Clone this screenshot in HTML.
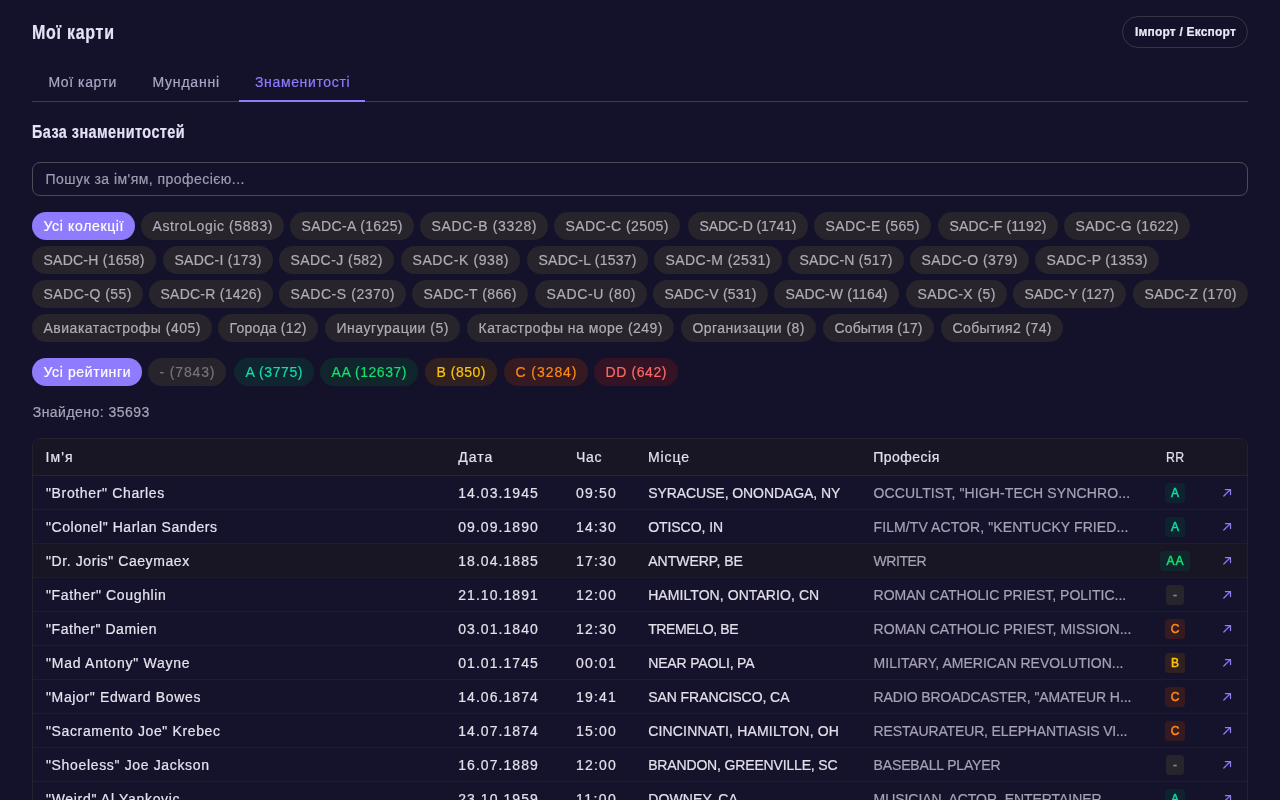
<!DOCTYPE html><html><head><meta charset="utf-8"><style>
html,body{margin:0;padding:0;width:1280px;height:800px;overflow:hidden;background:#14122b;}
body{position:relative;font-family:"Liberation Sans",sans-serif;}
.root{position:absolute;left:0;top:0;width:1280px;height:800px;will-change:transform;}
.b{position:absolute;box-sizing:border-box;}
.t{position:absolute;white-space:nowrap;-webkit-text-stroke:0.2px currentColor;}
</style></head><body><div class="root">
<div class="b" style="left:1122px;top:16px;width:126px;height:32px;border:1px solid #37344a;border-radius:16px;"></div>
<div class="b" style="left:32px;top:101px;width:1216px;height:1px;background:#3f3d4b;"></div>
<div class="b" style="left:239px;top:100px;width:126px;height:2px;background:#8e7bfd;"></div>
<div class="b" style="left:32px;top:162px;width:1216px;height:34px;border:1px solid #4d4c56;border-radius:8px;"></div>
<div class="b" style="left:32px;top:212px;width:103px;height:28px;background:#8e7bfd;border-radius:14px;"></div>
<div class="b" style="left:141px;top:212px;width:143px;height:28px;background:#27242b;border-radius:14px;"></div>
<div class="b" style="left:290px;top:212px;width:124px;height:28px;background:#27242b;border-radius:14px;"></div>
<div class="b" style="left:420px;top:212px;width:128px;height:28px;background:#27242b;border-radius:14px;"></div>
<div class="b" style="left:554px;top:212px;width:126px;height:28px;background:#27242b;border-radius:14px;"></div>
<div class="b" style="left:688px;top:212px;width:120px;height:28px;background:#27242b;border-radius:14px;"></div>
<div class="b" style="left:814px;top:212px;width:117px;height:28px;background:#27242b;border-radius:14px;"></div>
<div class="b" style="left:938px;top:212px;width:120px;height:28px;background:#27242b;border-radius:14px;"></div>
<div class="b" style="left:1064px;top:212px;width:126px;height:28px;background:#27242b;border-radius:14px;"></div>
<div class="b" style="left:32px;top:246px;width:124px;height:28px;background:#27242b;border-radius:14px;"></div>
<div class="b" style="left:163px;top:246px;width:110px;height:28px;background:#27242b;border-radius:14px;"></div>
<div class="b" style="left:279px;top:246px;width:115px;height:28px;background:#27242b;border-radius:14px;"></div>
<div class="b" style="left:401px;top:246px;width:119px;height:28px;background:#27242b;border-radius:14px;"></div>
<div class="b" style="left:527px;top:246px;width:121px;height:28px;background:#27242b;border-radius:14px;"></div>
<div class="b" style="left:654px;top:246px;width:128px;height:28px;background:#27242b;border-radius:14px;"></div>
<div class="b" style="left:788px;top:246px;width:116px;height:28px;background:#27242b;border-radius:14px;"></div>
<div class="b" style="left:910px;top:246px;width:119px;height:28px;background:#27242b;border-radius:14px;"></div>
<div class="b" style="left:1035px;top:246px;width:124px;height:28px;background:#27242b;border-radius:14px;"></div>
<div class="b" style="left:32px;top:280px;width:111px;height:28px;background:#27242b;border-radius:14px;"></div>
<div class="b" style="left:149px;top:280px;width:124px;height:28px;background:#27242b;border-radius:14px;"></div>
<div class="b" style="left:279px;top:280px;width:127px;height:28px;background:#27242b;border-radius:14px;"></div>
<div class="b" style="left:412px;top:280px;width:116px;height:28px;background:#27242b;border-radius:14px;"></div>
<div class="b" style="left:535px;top:280px;width:112px;height:28px;background:#27242b;border-radius:14px;"></div>
<div class="b" style="left:653px;top:280px;width:115px;height:28px;background:#27242b;border-radius:14px;"></div>
<div class="b" style="left:774px;top:280px;width:125px;height:28px;background:#27242b;border-radius:14px;"></div>
<div class="b" style="left:906px;top:280px;width:101px;height:28px;background:#27242b;border-radius:14px;"></div>
<div class="b" style="left:1013px;top:280px;width:113px;height:28px;background:#27242b;border-radius:14px;"></div>
<div class="b" style="left:1133px;top:280px;width:115px;height:28px;background:#27242b;border-radius:14px;"></div>
<div class="b" style="left:32px;top:314px;width:180px;height:28px;background:#27242b;border-radius:14px;"></div>
<div class="b" style="left:218px;top:314px;width:100px;height:28px;background:#27242b;border-radius:14px;"></div>
<div class="b" style="left:325px;top:314px;width:135px;height:28px;background:#27242b;border-radius:14px;"></div>
<div class="b" style="left:467px;top:314px;width:207px;height:28px;background:#27242b;border-radius:14px;"></div>
<div class="b" style="left:681px;top:314px;width:135px;height:28px;background:#27242b;border-radius:14px;"></div>
<div class="b" style="left:823px;top:314px;width:111px;height:28px;background:#27242b;border-radius:14px;"></div>
<div class="b" style="left:941px;top:314px;width:122px;height:28px;background:#27242b;border-radius:14px;"></div>
<div class="b" style="left:32px;top:358px;width:110px;height:28px;background:#8e7bfd;border-radius:14px;"></div>
<div class="b" style="left:148px;top:358px;width:78px;height:28px;background:#27242b;border-radius:14px;"></div>
<div class="b" style="left:234px;top:358px;width:80px;height:28px;background:#0f2530;border-radius:14px;"></div>
<div class="b" style="left:320px;top:358px;width:98px;height:28px;background:#11252c;border-radius:14px;"></div>
<div class="b" style="left:425px;top:358px;width:72px;height:28px;background:#302020;border-radius:14px;"></div>
<div class="b" style="left:504px;top:358px;width:84px;height:28px;background:#351a21;border-radius:14px;"></div>
<div class="b" style="left:594px;top:358px;width:84px;height:28px;background:#341424;border-radius:14px;"></div>
<div class="b" style="left:32px;top:438px;width:1216px;height:400px;border:1px solid #25212d;border-radius:8px;background:#15122c;"></div>
<div class="b" style="left:33px;top:439px;width:1214px;height:36px;background:#181524;border-radius:7px 7px 0 0;"></div>
<div class="b" style="left:33px;top:475px;width:1214px;height:1px;background:#27262a;"></div>
<div class="b" style="left:33px;top:509px;width:1214px;height:1px;background:#201d29;"></div>
<div class="b" style="left:1165.0px;top:483px;width:20px;height:20px;background:#0f2230;border-radius:3.5px;"></div>
<svg class="b" style="left:1216px;top:482px" width="22" height="22" viewBox="0 0 22 22"><path d="M9.4 7.5H14.5V12.6M7.8 14L14.3 7.6" fill="none" stroke="#8e7dfb" stroke-width="1.25" stroke-linecap="round" stroke-linejoin="round"/></svg>
<div class="b" style="left:33px;top:543px;width:1214px;height:1px;background:#201d29;"></div>
<div class="b" style="left:1165.0px;top:517px;width:20px;height:20px;background:#0f2230;border-radius:3.5px;"></div>
<svg class="b" style="left:1216px;top:516px" width="22" height="22" viewBox="0 0 22 22"><path d="M9.4 7.5H14.5V12.6M7.8 14L14.3 7.6" fill="none" stroke="#8e7dfb" stroke-width="1.25" stroke-linecap="round" stroke-linejoin="round"/></svg>
<div class="b" style="left:33px;top:544px;width:1214px;height:33px;background:#181524;"></div>
<div class="b" style="left:33px;top:577px;width:1214px;height:1px;background:#201d29;"></div>
<div class="b" style="left:1160.0px;top:551px;width:30px;height:20px;background:#11252c;border-radius:3.5px;"></div>
<svg class="b" style="left:1216px;top:550px" width="22" height="22" viewBox="0 0 22 22"><path d="M9.4 7.5H14.5V12.6M7.8 14L14.3 7.6" fill="none" stroke="#8e7dfb" stroke-width="1.25" stroke-linecap="round" stroke-linejoin="round"/></svg>
<div class="b" style="left:33px;top:611px;width:1214px;height:1px;background:#201d29;"></div>
<div class="b" style="left:1166.0px;top:585px;width:18px;height:20px;background:#27252c;border-radius:3.5px;"></div>
<svg class="b" style="left:1216px;top:584px" width="22" height="22" viewBox="0 0 22 22"><path d="M9.4 7.5H14.5V12.6M7.8 14L14.3 7.6" fill="none" stroke="#8e7dfb" stroke-width="1.25" stroke-linecap="round" stroke-linejoin="round"/></svg>
<div class="b" style="left:33px;top:645px;width:1214px;height:1px;background:#201d29;"></div>
<div class="b" style="left:1165.0px;top:619px;width:20px;height:20px;background:#351a21;border-radius:3.5px;"></div>
<svg class="b" style="left:1216px;top:618px" width="22" height="22" viewBox="0 0 22 22"><path d="M9.4 7.5H14.5V12.6M7.8 14L14.3 7.6" fill="none" stroke="#8e7dfb" stroke-width="1.25" stroke-linecap="round" stroke-linejoin="round"/></svg>
<div class="b" style="left:33px;top:679px;width:1214px;height:1px;background:#201d29;"></div>
<div class="b" style="left:1165.0px;top:653px;width:20px;height:20px;background:#302020;border-radius:3.5px;"></div>
<svg class="b" style="left:1216px;top:652px" width="22" height="22" viewBox="0 0 22 22"><path d="M9.4 7.5H14.5V12.6M7.8 14L14.3 7.6" fill="none" stroke="#8e7dfb" stroke-width="1.25" stroke-linecap="round" stroke-linejoin="round"/></svg>
<div class="b" style="left:33px;top:713px;width:1214px;height:1px;background:#201d29;"></div>
<div class="b" style="left:1165.0px;top:687px;width:20px;height:20px;background:#351a21;border-radius:3.5px;"></div>
<svg class="b" style="left:1216px;top:686px" width="22" height="22" viewBox="0 0 22 22"><path d="M9.4 7.5H14.5V12.6M7.8 14L14.3 7.6" fill="none" stroke="#8e7dfb" stroke-width="1.25" stroke-linecap="round" stroke-linejoin="round"/></svg>
<div class="b" style="left:33px;top:747px;width:1214px;height:1px;background:#201d29;"></div>
<div class="b" style="left:1165.0px;top:721px;width:20px;height:20px;background:#351a21;border-radius:3.5px;"></div>
<svg class="b" style="left:1216px;top:720px" width="22" height="22" viewBox="0 0 22 22"><path d="M9.4 7.5H14.5V12.6M7.8 14L14.3 7.6" fill="none" stroke="#8e7dfb" stroke-width="1.25" stroke-linecap="round" stroke-linejoin="round"/></svg>
<div class="b" style="left:33px;top:781px;width:1214px;height:1px;background:#201d29;"></div>
<div class="b" style="left:1166.0px;top:755px;width:18px;height:20px;background:#27252c;border-radius:3.5px;"></div>
<svg class="b" style="left:1216px;top:754px" width="22" height="22" viewBox="0 0 22 22"><path d="M9.4 7.5H14.5V12.6M7.8 14L14.3 7.6" fill="none" stroke="#8e7dfb" stroke-width="1.25" stroke-linecap="round" stroke-linejoin="round"/></svg>
<div class="b" style="left:33px;top:815px;width:1214px;height:1px;background:#201d29;"></div>
<div class="b" style="left:1165.0px;top:789px;width:20px;height:20px;background:#0f2230;border-radius:3.5px;"></div>
<svg class="b" style="left:1216px;top:788px" width="22" height="22" viewBox="0 0 22 22"><path d="M9.4 7.5H14.5V12.6M7.8 14L14.3 7.6" fill="none" stroke="#8e7dfb" stroke-width="1.25" stroke-linecap="round" stroke-linejoin="round"/></svg>
<div class="t" id="t0" style="left:31.80px;top:18.47px;font-size:20px;line-height:29px;color:#e6e2f5;font-weight:700;letter-spacing:0.908px;transform:scaleX(0.8);transform-origin:0 0;"><span>Мої карти</span></div>
<div class="t" id="t1" style="left:1134.90px;top:24.34px;font-size:12px;line-height:17px;color:#ece9f6;font-weight:700;letter-spacing:0.193px;"><span>Імпорт / Експорт</span></div>
<div class="t" id="t2" style="left:48.40px;top:72.45px;font-size:14px;line-height:20px;color:#aaa6c4;font-weight:400;letter-spacing:0.584px;"><span>Мої карти</span></div>
<div class="t" id="t3" style="left:152.40px;top:72.45px;font-size:14px;line-height:20px;color:#aaa6c4;font-weight:400;letter-spacing:0.815px;"><span>Мунданні</span></div>
<div class="t" id="t4" style="left:255.00px;top:72.45px;font-size:14px;line-height:20px;color:#8e7dfb;font-weight:400;letter-spacing:0.645px;"><span>Знаменитості</span></div>
<div class="t" id="t5" style="left:31.90px;top:118.56px;font-size:18px;line-height:26px;color:#e6e2f5;font-weight:700;letter-spacing:0.567px;transform:scaleX(0.8);transform-origin:0 0;"><span>База знаменитостей</span></div>
<div class="t" id="t6" style="left:45.60px;top:169.15px;font-size:14px;line-height:20px;color:#9f9bb2;font-weight:400;letter-spacing:0.457px;"><span>Пошук за ім'ям, професією...</span></div>
<div class="t" id="t7" style="left:32.00px;top:216.15px;font-size:14px;line-height:20px;color:#ffffff;font-weight:400;width:103px;text-align:center;letter-spacing:0.652px;text-indent:0.652px;"><span>Усі колекції</span></div>
<div class="t" id="t8" style="left:141.00px;top:216.15px;font-size:14px;line-height:20px;color:#b0acb6;font-weight:400;width:143px;text-align:center;letter-spacing:0.593px;text-indent:0.593px;"><span>AstroLogic (5883)</span></div>
<div class="t" id="t9" style="left:290.00px;top:216.15px;font-size:14px;line-height:20px;color:#b0acb6;font-weight:400;width:124px;text-align:center;letter-spacing:0.376px;text-indent:0.376px;"><span>SADC-A (1625)</span></div>
<div class="t" id="t10" style="left:420.00px;top:216.15px;font-size:14px;line-height:20px;color:#b0acb6;font-weight:400;width:128px;text-align:center;letter-spacing:0.645px;text-indent:0.645px;"><span>SADC-B (3328)</span></div>
<div class="t" id="t11" style="left:554.00px;top:216.15px;font-size:14px;line-height:20px;color:#b0acb6;font-weight:400;width:126px;text-align:center;letter-spacing:0.414px;text-indent:0.414px;"><span>SADC-C (2505)</span></div>
<div class="t" id="t12" style="left:688.00px;top:216.15px;font-size:14px;line-height:20px;color:#b0acb6;font-weight:400;width:120px;text-align:center;letter-spacing:-0.086px;text-indent:-0.086px;"><span>SADC-D (1741)</span></div>
<div class="t" id="t13" style="left:814.00px;top:216.15px;font-size:14px;line-height:20px;color:#b0acb6;font-weight:400;width:117px;text-align:center;letter-spacing:0.412px;text-indent:0.412px;"><span>SADC-E (565)</span></div>
<div class="t" id="t14" style="left:938.00px;top:216.15px;font-size:14px;line-height:20px;color:#b0acb6;font-weight:400;width:120px;text-align:center;letter-spacing:0.130px;text-indent:0.130px;"><span>SADC-F (1192)</span></div>
<div class="t" id="t15" style="left:1064.00px;top:216.15px;font-size:14px;line-height:20px;color:#b0acb6;font-weight:400;width:126px;text-align:center;letter-spacing:0.349px;text-indent:0.349px;"><span>SADC-G (1622)</span></div>
<div class="t" id="t16" style="left:32.00px;top:250.15px;font-size:14px;line-height:20px;color:#b0acb6;font-weight:400;width:124px;text-align:center;letter-spacing:0.247px;text-indent:0.247px;"><span>SADC-H (1658)</span></div>
<div class="t" id="t17" style="left:163.00px;top:250.15px;font-size:14px;line-height:20px;color:#b0acb6;font-weight:400;width:110px;text-align:center;letter-spacing:0.270px;text-indent:0.270px;"><span>SADC-I (173)</span></div>
<div class="t" id="t18" style="left:279.00px;top:250.15px;font-size:14px;line-height:20px;color:#b0acb6;font-weight:400;width:115px;text-align:center;letter-spacing:0.442px;text-indent:0.442px;"><span>SADC-J (582)</span></div>
<div class="t" id="t19" style="left:401.00px;top:250.15px;font-size:14px;line-height:20px;color:#b0acb6;font-weight:400;width:119px;text-align:center;letter-spacing:0.594px;text-indent:0.594px;"><span>SADC-K (938)</span></div>
<div class="t" id="t20" style="left:527.00px;top:250.15px;font-size:14px;line-height:20px;color:#b0acb6;font-weight:400;width:121px;text-align:center;letter-spacing:0.234px;text-indent:0.234px;"><span>SADC-L (1537)</span></div>
<div class="t" id="t21" style="left:654.00px;top:250.15px;font-size:14px;line-height:20px;color:#b0acb6;font-weight:400;width:128px;text-align:center;letter-spacing:0.451px;text-indent:0.451px;"><span>SADC-M (2531)</span></div>
<div class="t" id="t22" style="left:788.00px;top:250.15px;font-size:14px;line-height:20px;color:#b0acb6;font-weight:400;width:116px;text-align:center;letter-spacing:0.250px;text-indent:0.250px;"><span>SADC-N (517)</span></div>
<div class="t" id="t23" style="left:910.00px;top:250.15px;font-size:14px;line-height:20px;color:#b0acb6;font-weight:400;width:119px;text-align:center;letter-spacing:0.452px;text-indent:0.452px;"><span>SADC-O (379)</span></div>
<div class="t" id="t24" style="left:1035.00px;top:250.15px;font-size:14px;line-height:20px;color:#b0acb6;font-weight:400;width:124px;text-align:center;letter-spacing:0.332px;text-indent:0.332px;"><span>SADC-P (1353)</span></div>
<div class="t" id="t25" style="left:32.00px;top:284.15px;font-size:14px;line-height:20px;color:#b0acb6;font-weight:400;width:111px;text-align:center;letter-spacing:0.477px;text-indent:0.477px;"><span>SADC-Q (55)</span></div>
<div class="t" id="t26" style="left:149.00px;top:284.15px;font-size:14px;line-height:20px;color:#b0acb6;font-weight:400;width:124px;text-align:center;letter-spacing:0.247px;text-indent:0.247px;"><span>SADC-R (1426)</span></div>
<div class="t" id="t27" style="left:279.00px;top:284.15px;font-size:14px;line-height:20px;color:#b0acb6;font-weight:400;width:127px;text-align:center;letter-spacing:0.561px;text-indent:0.561px;"><span>SADC-S (2370)</span></div>
<div class="t" id="t28" style="left:412.00px;top:284.15px;font-size:14px;line-height:20px;color:#b0acb6;font-weight:400;width:116px;text-align:center;letter-spacing:0.415px;text-indent:0.415px;"><span>SADC-T (866)</span></div>
<div class="t" id="t29" style="left:535.00px;top:284.15px;font-size:14px;line-height:20px;color:#b0acb6;font-weight:400;width:112px;text-align:center;letter-spacing:0.653px;text-indent:0.653px;"><span>SADC-U (80)</span></div>
<div class="t" id="t30" style="left:653.00px;top:284.15px;font-size:14px;line-height:20px;color:#b0acb6;font-weight:400;width:115px;text-align:center;letter-spacing:0.230px;text-indent:0.230px;"><span>SADC-V (531)</span></div>
<div class="t" id="t31" style="left:774.00px;top:284.15px;font-size:14px;line-height:20px;color:#b0acb6;font-weight:400;width:125px;text-align:center;letter-spacing:0.159px;text-indent:0.159px;"><span>SADC-W (1164)</span></div>
<div class="t" id="t32" style="left:906.00px;top:284.15px;font-size:14px;line-height:20px;color:#b0acb6;font-weight:400;width:101px;text-align:center;letter-spacing:0.455px;text-indent:0.455px;"><span>SADC-X (5)</span></div>
<div class="t" id="t33" style="left:1013.00px;top:284.15px;font-size:14px;line-height:20px;color:#b0acb6;font-weight:400;width:113px;text-align:center;letter-spacing:0.071px;text-indent:0.071px;"><span>SADC-Y (127)</span></div>
<div class="t" id="t34" style="left:1133.00px;top:284.15px;font-size:14px;line-height:20px;color:#b0acb6;font-weight:400;width:115px;text-align:center;letter-spacing:0.301px;text-indent:0.301px;"><span>SADC-Z (170)</span></div>
<div class="t" id="t35" style="left:32.00px;top:318.15px;font-size:14px;line-height:20px;color:#b0acb6;font-weight:400;width:180px;text-align:center;letter-spacing:0.501px;text-indent:0.501px;"><span>Авиакатастрофы (405)</span></div>
<div class="t" id="t36" style="left:218.00px;top:318.15px;font-size:14px;line-height:20px;color:#b0acb6;font-weight:400;width:100px;text-align:center;letter-spacing:0.256px;text-indent:0.256px;"><span>Города (12)</span></div>
<div class="t" id="t37" style="left:325.00px;top:318.15px;font-size:14px;line-height:20px;color:#b0acb6;font-weight:400;width:135px;text-align:center;letter-spacing:0.528px;text-indent:0.528px;"><span>Инаугурации (5)</span></div>
<div class="t" id="t38" style="left:467.00px;top:318.15px;font-size:14px;line-height:20px;color:#b0acb6;font-weight:400;width:207px;text-align:center;letter-spacing:0.474px;text-indent:0.474px;"><span>Катастрофы на море (249)</span></div>
<div class="t" id="t39" style="left:681.00px;top:318.15px;font-size:14px;line-height:20px;color:#b0acb6;font-weight:400;width:135px;text-align:center;letter-spacing:0.451px;text-indent:0.451px;"><span>Организации (8)</span></div>
<div class="t" id="t40" style="left:823.00px;top:318.15px;font-size:14px;line-height:20px;color:#b0acb6;font-weight:400;width:111px;text-align:center;letter-spacing:0.129px;text-indent:0.129px;"><span>События (17)</span></div>
<div class="t" id="t41" style="left:941.00px;top:318.15px;font-size:14px;line-height:20px;color:#b0acb6;font-weight:400;width:122px;text-align:center;letter-spacing:0.385px;text-indent:0.385px;"><span>События2 (74)</span></div>
<div class="t" id="t42" style="left:32.00px;top:362.15px;font-size:14px;line-height:20px;color:#ffffff;font-weight:400;width:110px;text-align:center;letter-spacing:0.614px;text-indent:0.614px;"><span>Усі рейтинги</span></div>
<div class="t" id="t43" style="left:148.00px;top:362.15px;font-size:14px;line-height:20px;color:#77737f;font-weight:400;width:78px;text-align:center;letter-spacing:0.853px;text-indent:0.853px;"><span>- (7843)</span></div>
<div class="t" id="t44" style="left:234.00px;top:362.15px;font-size:14px;line-height:20px;color:#14dca6;font-weight:400;width:80px;text-align:center;letter-spacing:0.580px;text-indent:0.580px;"><span>A (3775)</span></div>
<div class="t" id="t45" style="left:320.00px;top:362.15px;font-size:14px;line-height:20px;color:#12df70;font-weight:400;width:98px;text-align:center;letter-spacing:0.549px;text-indent:0.549px;"><span>AA (12637)</span></div>
<div class="t" id="t46" style="left:425.00px;top:362.15px;font-size:14px;line-height:20px;color:#fcc30e;font-weight:400;width:72px;text-align:center;letter-spacing:0.513px;text-indent:0.513px;"><span>B (850)</span></div>
<div class="t" id="t47" style="left:504.00px;top:362.15px;font-size:14px;line-height:20px;color:#fd8a12;font-weight:400;width:84px;text-align:center;letter-spacing:0.933px;text-indent:0.933px;"><span>C (3284)</span></div>
<div class="t" id="t48" style="left:594.00px;top:362.15px;font-size:14px;line-height:20px;color:#fd6868;font-weight:400;width:84px;text-align:center;letter-spacing:0.600px;text-indent:0.600px;"><span>DD (642)</span></div>
<div class="t" id="t49" style="left:32.75px;top:402.15px;font-size:14px;line-height:20px;color:#a7a3ba;font-weight:400;letter-spacing:0.465px;"><span>Знайдено: 35693</span></div>
<div class="t" id="t50" style="left:45.50px;top:447.15px;font-size:14px;line-height:20px;color:#e3e0ec;font-weight:500;letter-spacing:1.073px;"><span>Ім'я</span></div>
<div class="t" id="t51" style="left:458.20px;top:447.15px;font-size:14px;line-height:20px;color:#e3e0ec;font-weight:500;letter-spacing:0.995px;"><span>Дата</span></div>
<div class="t" id="t52" style="left:576.00px;top:447.15px;font-size:14px;line-height:20px;color:#e3e0ec;font-weight:500;letter-spacing:0.637px;"><span>Час</span></div>
<div class="t" id="t53" style="left:648.00px;top:447.15px;font-size:14px;line-height:20px;color:#e3e0ec;font-weight:500;letter-spacing:0.895px;"><span>Місце</span></div>
<div class="t" id="t54" style="left:873.25px;top:447.15px;font-size:14px;line-height:20px;color:#e3e0ec;font-weight:500;letter-spacing:0.480px;"><span>Професія</span></div>
<div class="t" id="t55" style="left:1166.30px;top:447.15px;font-size:14px;line-height:20px;color:#e3e0ec;font-weight:500;letter-spacing:0.425px;transform:scaleX(0.88);transform-origin:0 0;"><span>RR</span></div>
<div class="t" id="t56" style="left:46.00px;top:483.15px;font-size:14px;line-height:20px;color:#e6e3ef;font-weight:400;letter-spacing:0.645px;"><span>"Brother" Charles</span></div>
<div class="t" id="t57" style="left:458.20px;top:483.15px;font-size:14px;line-height:20px;color:#e3e0ea;font-weight:400;letter-spacing:1.058px;"><span>14.03.1945</span></div>
<div class="t" id="t58" style="left:576.00px;top:483.15px;font-size:14px;line-height:20px;color:#e3e0ea;font-weight:400;letter-spacing:1.213px;"><span>09:50</span></div>
<div class="t" id="t59" style="left:648.20px;top:483.15px;font-size:14px;line-height:20px;color:#e3e0ea;font-weight:400;letter-spacing:-0.072px;"><span>SYRACUSE, ONONDAGA, NY</span></div>
<div class="t" id="t60" style="left:873.60px;top:483.15px;font-size:14px;line-height:20px;color:#a6a2b6;font-weight:400;letter-spacing:0.118px;"><span>OCCULTIST, "HIGH-TECH SYNCHRO...</span></div>
<div class="t" id="t61" style="left:1165.00px;top:485.04px;font-size:12px;line-height:17px;color:#12dca2;font-weight:400;width:20px;text-align:center;-webkit-text-stroke:0.5px currentColor;"><span>A</span></div>
<div class="t" id="t62" style="left:46.00px;top:517.15px;font-size:14px;line-height:20px;color:#e6e3ef;font-weight:400;letter-spacing:0.539px;"><span>"Colonel" Harlan Sanders</span></div>
<div class="t" id="t63" style="left:458.20px;top:517.15px;font-size:14px;line-height:20px;color:#e3e0ea;font-weight:400;letter-spacing:1.058px;"><span>09.09.1890</span></div>
<div class="t" id="t64" style="left:576.00px;top:517.15px;font-size:14px;line-height:20px;color:#e3e0ea;font-weight:400;letter-spacing:1.213px;"><span>14:30</span></div>
<div class="t" id="t65" style="left:648.20px;top:517.15px;font-size:14px;line-height:20px;color:#e3e0ea;font-weight:400;letter-spacing:-0.061px;"><span>OTISCO, IN</span></div>
<div class="t" id="t66" style="left:873.60px;top:517.15px;font-size:14px;line-height:20px;color:#a6a2b6;font-weight:400;letter-spacing:0.090px;"><span>FILM/TV ACTOR, "KENTUCKY FRIED...</span></div>
<div class="t" id="t67" style="left:1165.00px;top:519.04px;font-size:12px;line-height:17px;color:#12dca2;font-weight:400;width:20px;text-align:center;-webkit-text-stroke:0.5px currentColor;"><span>A</span></div>
<div class="t" id="t68" style="left:46.00px;top:551.15px;font-size:14px;line-height:20px;color:#e6e3ef;font-weight:400;letter-spacing:0.585px;"><span>"Dr. Joris" Caeymaex</span></div>
<div class="t" id="t69" style="left:458.20px;top:551.15px;font-size:14px;line-height:20px;color:#e3e0ea;font-weight:400;letter-spacing:1.058px;"><span>18.04.1885</span></div>
<div class="t" id="t70" style="left:576.00px;top:551.15px;font-size:14px;line-height:20px;color:#e3e0ea;font-weight:400;letter-spacing:1.213px;"><span>17:30</span></div>
<div class="t" id="t71" style="left:648.20px;top:551.15px;font-size:14px;line-height:20px;color:#e3e0ea;font-weight:400;letter-spacing:0.004px;"><span>ANTWERP, BE</span></div>
<div class="t" id="t72" style="left:873.60px;top:551.15px;font-size:14px;line-height:20px;color:#a6a2b6;font-weight:400;letter-spacing:-0.444px;"><span>WRITER</span></div>
<div class="t" id="t73" style="left:1160.00px;top:553.04px;font-size:12px;line-height:17px;color:#12df70;font-weight:400;width:30px;text-align:center;letter-spacing:1.184px;text-indent:1.184px;-webkit-text-stroke:0.5px currentColor;"><span>AA</span></div>
<div class="t" id="t74" style="left:46.00px;top:585.15px;font-size:14px;line-height:20px;color:#e6e3ef;font-weight:400;letter-spacing:0.646px;"><span>"Father" Coughlin</span></div>
<div class="t" id="t75" style="left:458.20px;top:585.15px;font-size:14px;line-height:20px;color:#e3e0ea;font-weight:400;letter-spacing:1.058px;"><span>21.10.1891</span></div>
<div class="t" id="t76" style="left:576.00px;top:585.15px;font-size:14px;line-height:20px;color:#e3e0ea;font-weight:400;letter-spacing:1.213px;"><span>12:00</span></div>
<div class="t" id="t77" style="left:648.20px;top:585.15px;font-size:14px;line-height:20px;color:#e3e0ea;font-weight:400;letter-spacing:0.071px;"><span>HAMILTON, ONTARIO, CN</span></div>
<div class="t" id="t78" style="left:873.60px;top:585.15px;font-size:14px;line-height:20px;color:#a6a2b6;font-weight:400;letter-spacing:0.001px;"><span>ROMAN CATHOLIC PRIEST, POLITIC...</span></div>
<div class="t" id="t79" style="left:1166.00px;top:587.04px;font-size:12px;line-height:17px;color:#8a8690;font-weight:400;width:18px;text-align:center;-webkit-text-stroke:0.5px currentColor;"><span>-</span></div>
<div class="t" id="t80" style="left:46.00px;top:619.15px;font-size:14px;line-height:20px;color:#e6e3ef;font-weight:400;letter-spacing:0.568px;"><span>"Father" Damien</span></div>
<div class="t" id="t81" style="left:458.20px;top:619.15px;font-size:14px;line-height:20px;color:#e3e0ea;font-weight:400;letter-spacing:1.058px;"><span>03.01.1840</span></div>
<div class="t" id="t82" style="left:576.00px;top:619.15px;font-size:14px;line-height:20px;color:#e3e0ea;font-weight:400;letter-spacing:1.213px;"><span>12:30</span></div>
<div class="t" id="t83" style="left:648.20px;top:619.15px;font-size:14px;line-height:20px;color:#e3e0ea;font-weight:400;letter-spacing:-0.374px;"><span>TREMELO, BE</span></div>
<div class="t" id="t84" style="left:873.60px;top:619.15px;font-size:14px;line-height:20px;color:#a6a2b6;font-weight:400;letter-spacing:0.018px;"><span>ROMAN CATHOLIC PRIEST, MISSION...</span></div>
<div class="t" id="t85" style="left:1165.00px;top:621.04px;font-size:12px;line-height:17px;color:#fd8a12;font-weight:400;width:20px;text-align:center;-webkit-text-stroke:0.5px currentColor;"><span>C</span></div>
<div class="t" id="t86" style="left:46.00px;top:653.15px;font-size:14px;line-height:20px;color:#e6e3ef;font-weight:400;letter-spacing:0.751px;"><span>"Mad Antony" Wayne</span></div>
<div class="t" id="t87" style="left:458.20px;top:653.15px;font-size:14px;line-height:20px;color:#e3e0ea;font-weight:400;letter-spacing:1.058px;"><span>01.01.1745</span></div>
<div class="t" id="t88" style="left:576.00px;top:653.15px;font-size:14px;line-height:20px;color:#e3e0ea;font-weight:400;letter-spacing:1.213px;"><span>00:01</span></div>
<div class="t" id="t89" style="left:648.20px;top:653.15px;font-size:14px;line-height:20px;color:#e3e0ea;font-weight:400;letter-spacing:-0.154px;"><span>NEAR PAOLI, PA</span></div>
<div class="t" id="t90" style="left:873.60px;top:653.15px;font-size:14px;line-height:20px;color:#a6a2b6;font-weight:400;letter-spacing:0.031px;"><span>MILITARY, AMERICAN REVOLUTION...</span></div>
<div class="t" id="t91" style="left:1165.00px;top:655.04px;font-size:12px;line-height:17px;color:#fcc30e;font-weight:400;width:20px;text-align:center;-webkit-text-stroke:0.5px currentColor;"><span>B</span></div>
<div class="t" id="t92" style="left:46.00px;top:687.15px;font-size:14px;line-height:20px;color:#e6e3ef;font-weight:400;letter-spacing:0.641px;"><span>"Major" Edward Bowes</span></div>
<div class="t" id="t93" style="left:458.20px;top:687.15px;font-size:14px;line-height:20px;color:#e3e0ea;font-weight:400;letter-spacing:1.058px;"><span>14.06.1874</span></div>
<div class="t" id="t94" style="left:576.00px;top:687.15px;font-size:14px;line-height:20px;color:#e3e0ea;font-weight:400;letter-spacing:1.213px;"><span>19:41</span></div>
<div class="t" id="t95" style="left:648.20px;top:687.15px;font-size:14px;line-height:20px;color:#e3e0ea;font-weight:400;letter-spacing:-0.066px;"><span>SAN FRANCISCO, CA</span></div>
<div class="t" id="t96" style="left:873.60px;top:687.15px;font-size:14px;line-height:20px;color:#a6a2b6;font-weight:400;letter-spacing:-0.092px;"><span>RADIO BROADCASTER, "AMATEUR H...</span></div>
<div class="t" id="t97" style="left:1165.00px;top:689.04px;font-size:12px;line-height:17px;color:#fd8a12;font-weight:400;width:20px;text-align:center;-webkit-text-stroke:0.5px currentColor;"><span>C</span></div>
<div class="t" id="t98" style="left:46.00px;top:721.15px;font-size:14px;line-height:20px;color:#e6e3ef;font-weight:400;letter-spacing:0.630px;"><span>"Sacramento Joe" Krebec</span></div>
<div class="t" id="t99" style="left:458.20px;top:721.15px;font-size:14px;line-height:20px;color:#e3e0ea;font-weight:400;letter-spacing:1.058px;"><span>14.07.1874</span></div>
<div class="t" id="t100" style="left:576.00px;top:721.15px;font-size:14px;line-height:20px;color:#e3e0ea;font-weight:400;letter-spacing:1.213px;"><span>15:00</span></div>
<div class="t" id="t101" style="left:648.20px;top:721.15px;font-size:14px;line-height:20px;color:#e3e0ea;font-weight:400;letter-spacing:0.179px;"><span>CINCINNATI, HAMILTON, OH</span></div>
<div class="t" id="t102" style="left:873.60px;top:721.15px;font-size:14px;line-height:20px;color:#a6a2b6;font-weight:400;letter-spacing:-0.145px;"><span>RESTAURATEUR, ELEPHANTIASIS VI...</span></div>
<div class="t" id="t103" style="left:1165.00px;top:723.04px;font-size:12px;line-height:17px;color:#fd8a12;font-weight:400;width:20px;text-align:center;-webkit-text-stroke:0.5px currentColor;"><span>C</span></div>
<div class="t" id="t104" style="left:46.00px;top:755.15px;font-size:14px;line-height:20px;color:#e6e3ef;font-weight:400;letter-spacing:0.655px;"><span>"Shoeless" Joe Jackson</span></div>
<div class="t" id="t105" style="left:458.20px;top:755.15px;font-size:14px;line-height:20px;color:#e3e0ea;font-weight:400;letter-spacing:1.058px;"><span>16.07.1889</span></div>
<div class="t" id="t106" style="left:576.00px;top:755.15px;font-size:14px;line-height:20px;color:#e3e0ea;font-weight:400;letter-spacing:1.213px;"><span>12:00</span></div>
<div class="t" id="t107" style="left:648.20px;top:755.15px;font-size:14px;line-height:20px;color:#e3e0ea;font-weight:400;letter-spacing:-0.161px;"><span>BRANDON, GREENVILLE, SC</span></div>
<div class="t" id="t108" style="left:873.60px;top:755.15px;font-size:14px;line-height:20px;color:#a6a2b6;font-weight:400;letter-spacing:-0.156px;"><span>BASEBALL PLAYER</span></div>
<div class="t" id="t109" style="left:1166.00px;top:757.04px;font-size:12px;line-height:17px;color:#8a8690;font-weight:400;width:18px;text-align:center;-webkit-text-stroke:0.5px currentColor;"><span>-</span></div>
<div class="t" id="t110" style="left:46.00px;top:789.15px;font-size:14px;line-height:20px;color:#e6e3ef;font-weight:400;letter-spacing:0.688px;"><span>"Weird" Al Yankovic</span></div>
<div class="t" id="t111" style="left:458.20px;top:789.15px;font-size:14px;line-height:20px;color:#e3e0ea;font-weight:400;letter-spacing:1.058px;"><span>23.10.1959</span></div>
<div class="t" id="t112" style="left:576.00px;top:789.15px;font-size:14px;line-height:20px;color:#e3e0ea;font-weight:400;letter-spacing:1.475px;"><span>11:00</span></div>
<div class="t" id="t113" style="left:648.20px;top:789.15px;font-size:14px;line-height:20px;color:#e3e0ea;font-weight:400;letter-spacing:0.129px;"><span>DOWNEY, CA</span></div>
<div class="t" id="t114" style="left:873.60px;top:789.15px;font-size:14px;line-height:20px;color:#a6a2b6;font-weight:400;letter-spacing:-0.055px;"><span>MUSICIAN, ACTOR, ENTERTAINER</span></div>
<div class="t" id="t115" style="left:1165.00px;top:791.04px;font-size:12px;line-height:17px;color:#12dca2;font-weight:400;width:20px;text-align:center;-webkit-text-stroke:0.5px currentColor;"><span>A</span></div>
</div></body></html>
